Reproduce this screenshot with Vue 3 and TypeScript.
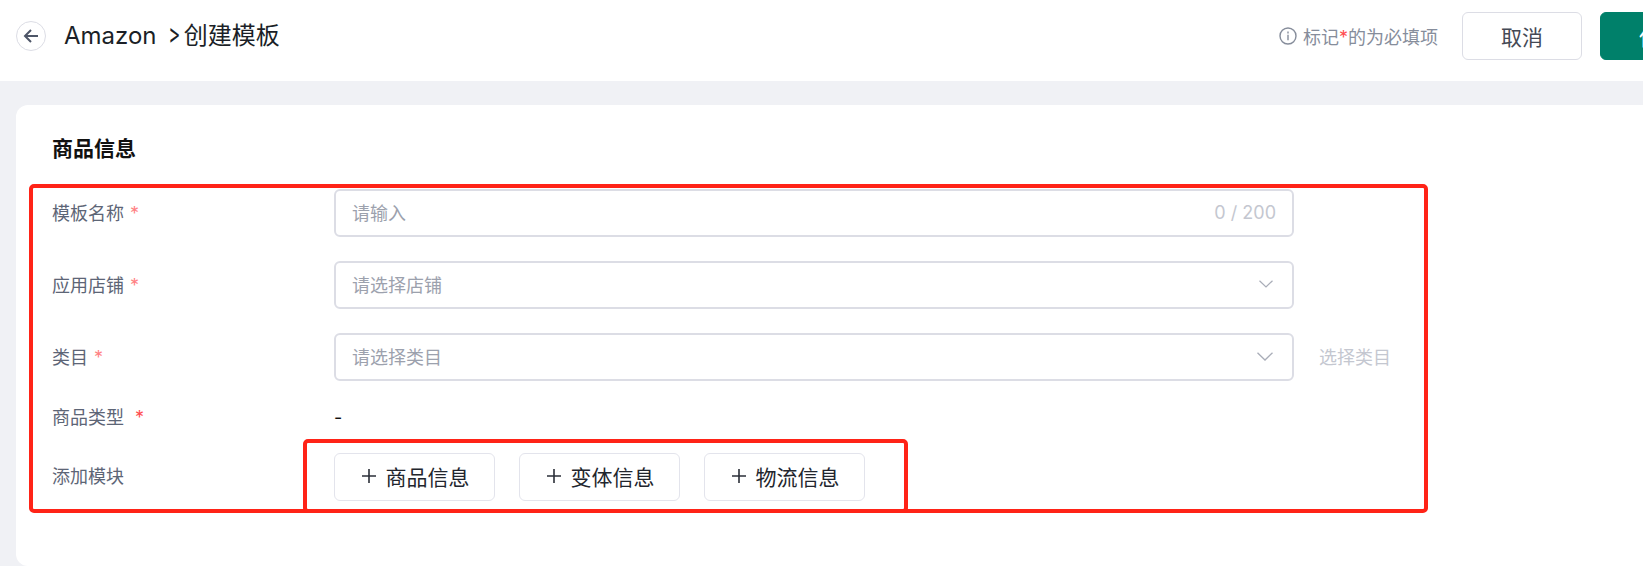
<script setup lang="ts">
const modules = ['商品信息', '变体信息', '物流信息']
</script>

<template>
  <div class="page">
    <header class="header">
      <button class="back" type="button">
        <svg width="16" height="16" viewBox="0 0 16 16" fill="none" stroke="#4e5668" stroke-width="2">
          <path d="M15 8H2M8 2 2 8l6 6" />
        </svg>
      </button>
      <h1 class="title">Amazon <span class="chev">&gt;</span>创建模板</h1>
      <div class="tip">
        <svg width="18" height="18" viewBox="0 0 18 18" fill="none" stroke="#868d9b" stroke-width="1.4">
          <circle cx="9" cy="9" r="8" />
          <path d="M9 7.8v5.4" />
          <path d="M9 4.6v1.8" />
        </svg>
        <span>标记<i class="star">*</i>的为必填项</span>
      </div>
      <button class="btn" type="button">取消</button>
      <button class="btn primary" type="button">保存</button>
    </header>

    <main class="card">
      <h2 class="card-title">商品信息</h2>

      <div class="row">
        <label class="label">模板名称<i class="star sep">*</i></label>
        <div class="control">
          <span class="placeholder">请输入</span>
          <span class="count">0 / 200</span>
        </div>
      </div>

      <div class="row">
        <label class="label">应用店铺<i class="star sep">*</i></label>
        <div class="control">
          <span class="placeholder">请选择店铺</span>
          <svg class="arrow" width="14" height="8" viewBox="0 0 14 8" fill="none" stroke="#a9adb8" stroke-width="1.2">
            <path d="M.5 .7 7 7 13.5 .7" />
          </svg>
        </div>
      </div>

      <div class="row">
        <label class="label">类目<i class="star sep">*</i></label>
        <div class="control">
          <span class="placeholder">请选择类目</span>
          <svg class="arrow" width="16" height="9" viewBox="0 0 16 9" fill="none" stroke="#a9adb8" stroke-width="1.3">
            <path d="M.5 .7 8 8 15.5 .7" />
          </svg>
        </div>
        <span class="pick">选择类目</span>
      </div>

      <div class="row type-row">
        <label class="label">商品类型<i class="star sep-wide">*</i></label>
        <span class="dash">-</span>
      </div>

      <div class="row module-row">
        <label class="label">添加模块</label>
        <div class="modules">
          <button v-for="m in modules" :key="m" class="module" type="button">
            <svg width="14" height="14" viewBox="0 0 14 14" fill="none" stroke="#2b2f38" stroke-width="1.6">
              <path d="M7 0v14M0 7h14" />
            </svg>
            {{ m }}
          </button>
        </div>
      </div>

      <!-- annotation boxes drawn over the form -->
      <div class="mark mark-outer" />
      <div class="mark mark-inner" />
    </main>
  </div>
</template>

<style scoped>
.page {
  width: 1744px;
  height: 566px;
  background: #f0f1f5;
  font-family: Inter, "Noto Sans CJK SC", sans-serif;
}

.header {
  height: 81px;
  padding: 0 24px 9px 16px;
  display: flex;
  align-items: center;
  box-sizing: border-box;
  background: #fff;
}

.back {
  width: 30px;
  height: 30px;
  padding: 0;
  display: flex;
  align-items: center;
  justify-content: center;
  border: 1px solid #dcdde5;
  border-radius: 50%;
  background: #fff;
}

.title {
  margin: 0 0 0 18px;
  font-size: 24px;
  font-weight: 400;
  line-height: 32px;
  color: #1b1f27;
}

.chev {
  display: inline-block;
  margin: 0 0 0 2px;
  font-size: 28px;
  line-height: 28px;
  transform: scaleX(0.65);
}

.tip {
  margin-left: auto;
  display: flex;
  align-items: center;
  gap: 6px;
  font-size: 18px;
  color: #868d9b;
}

.star {
  font-style: normal;
  color: #ff4d4f;
}

.btn {
  width: 120px;
  height: 48px;
  margin-left: 24px;
  border: 1px solid #dcdde5;
  border-radius: 6px;
  background: #fff;
  font-family: inherit;
  font-size: 21px;
  color: #444955;
}

.primary {
  margin-left: 18px;
  border-color: #00806a;
  background: #00806a;
  color: #fff;
}

.card {
  position: relative;
  height: 461px;
  margin: 24px 16px 0;
  padding: 29px 36px 0;
  box-sizing: border-box;
  border-radius: 12px;
  background: #fff;
}

.card-title {
  margin: 0 0 25px;
  font-size: 21px;
  font-weight: 700;
  line-height: 30px;
  color: #111;
}

.row {
  display: flex;
  align-items: center;
  margin-bottom: 24px;
}

.label {
  width: 282px;
  flex-shrink: 0;
  padding-bottom: 3px;
  font-size: 18px;
  color: #5d6576;
}

.module-row .label {
  padding-bottom: 5px;
}

.sep {
  margin-left: 6px;
  opacity: 0.7;
}

.sep-wide {
  margin-left: 11px;
}

.control {
  width: 960px;
  height: 48px;
  padding: 0 16px 2px;
  box-sizing: border-box;
  display: flex;
  align-items: center;
  justify-content: space-between;
  border: 2px solid #dcdde5;
  border-radius: 6px;
  background: #fff;
  font-size: 18px;
}

.placeholder {
  color: #9ca1ad;
}

.count {
  color: #c4c7d0;
}

.arrow {
  margin-right: 3px;
}

.pick {
  margin-left: 25px;
  padding-bottom: 2px;
  font-size: 18px;
  color: #c4c7d0;
}

.type-row {
  height: 24px;
}

.dash {
  font-size: 18px;
  color: #111;
}

.modules {
  display: flex;
  gap: 24px;
}

.module {
  width: 161px;
  height: 48px;
  padding: 0 0 3px 2px;
  display: flex;
  align-items: center;
  justify-content: center;
  gap: 10px;
  border: 1px solid #e3e4ec;
  border-radius: 6px;
  background: #fff;
  font-family: inherit;
  font-size: 21px;
  color: #22252d;
}

.mark {
  position: absolute;
  box-sizing: border-box;
  border: 4px solid #ff2317;
  border-radius: 5px;
  pointer-events: none;
}

.mark-outer {
  left: 13px;
  top: 79px;
  width: 1399px;
  height: 329px;
}

.mark-inner {
  left: 287px;
  top: 334px;
  width: 605px;
  height: 74px;
}
</style>

<style>
html,
body {
  margin: 0;
  overflow: hidden;
}
</style>
